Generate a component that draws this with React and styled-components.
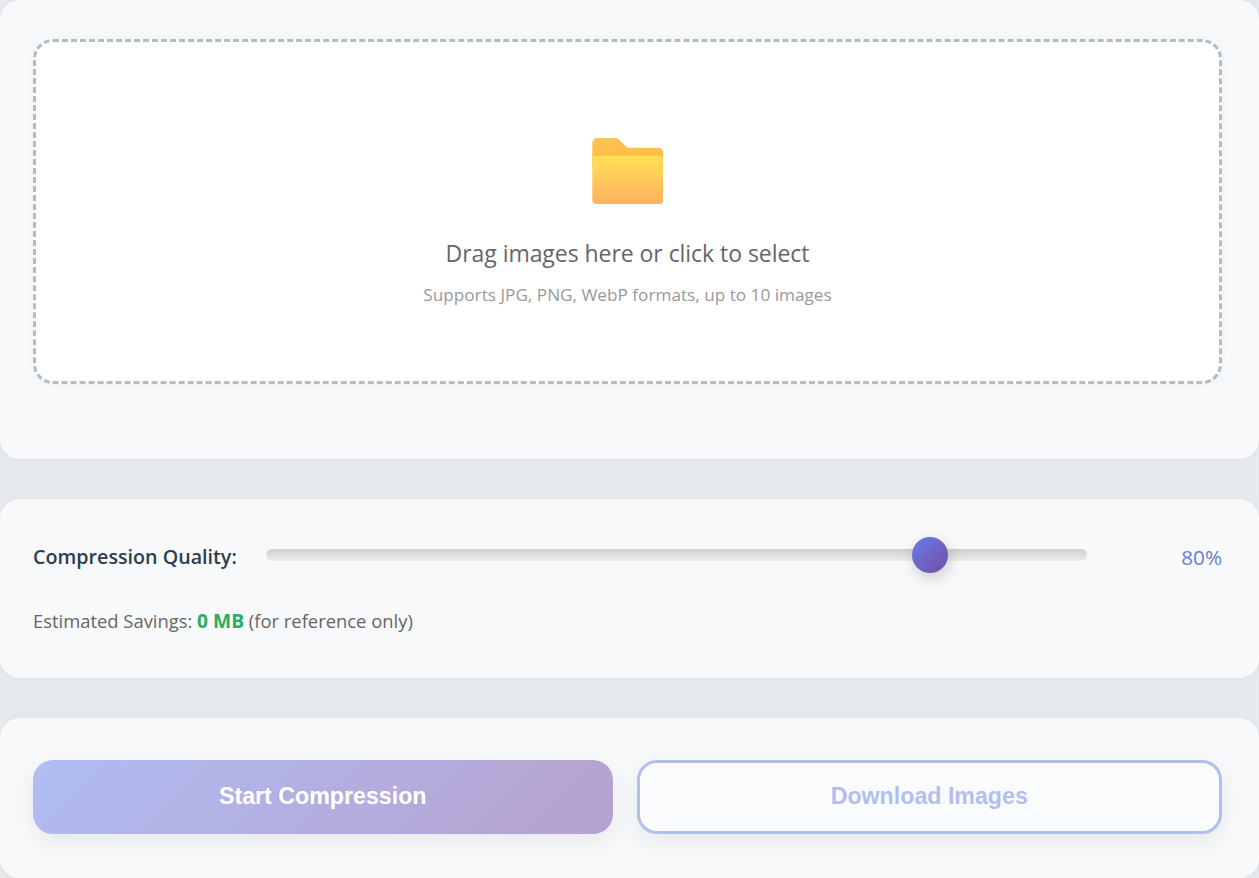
import React from 'react';
import styled, { createGlobalStyle } from 'styled-components';

const GlobalStyle = createGlobalStyle`
    html, body {
        margin: 0;
        padding: 0;
        height: 878px;
        overflow: hidden;
    }
    body {
        font-family: "Open Sans", "Noto Sans", sans-serif;
        background-color: #e5e8eb;
        background-image:
            repeating-linear-gradient(90deg, rgba(255, 255, 255, 0.12) 0 1px, transparent 1px 4px),
            repeating-linear-gradient(0deg, rgba(255, 255, 255, 0.12) 0 1px, transparent 1px 4px);
    }
`;

const Page = styled.div`
    display: flex;
    flex-direction: column;
    gap: 40px;
`;

const Card = styled.section`
    background: #f8f9fb;
    border-radius: 20px;
    padding: ${(props) => props.$padding};
    box-shadow: 0 0 6px rgba(0, 0, 0, 0.03);
`;

const DropZone = styled.div`
    height: 345px;
    box-sizing: border-box;
    background: #fff;
    border: 3px dashed #b0bec5;
    border-radius: 20px;
    display: flex;
    flex-direction: column;
    align-items: center;
    box-shadow: 0 0 10px rgba(0, 0, 0, 0.04);
    padding-top: 96px;
`;

const FolderIcon = styled.svg`
    width: 71.5px;
    height: 66px;
    display: block;
`;

const DropTitle = styled.div`
    margin-top: 34px;
    font-size: 23px;
    line-height: 30px;
    letter-spacing: -0.05px;
    color: #666;
`;

const DropHint = styled.div`
    margin-top: 16px;
    font-size: 17.2px;
    line-height: 22px;
    color: #999;
`;

const QualityRow = styled.div`
    display: flex;
    align-items: center;
    height: 36px;
`;

const QualityLabel = styled.label`
    width: 233px;
    flex: none;
    padding-top: 3px;
    font-size: 19.7px;
    font-weight: 600;
    color: #2c3e50;
    white-space: nowrap;
`;

const SliderTrack = styled.div`
    position: relative;
    width: 821px;
    height: 12px;
    flex: none;
    border-radius: 6px;
    background: linear-gradient(180deg, #cdcdcd, #eeeeee);
`;

const SliderThumb = styled.div`
    position: absolute;
    top: 50%;
    width: 36px;
    height: 36px;
    border-radius: 50%;
    transform: translate(-50%, -50%);
    background: linear-gradient(135deg, #667eea, #764ba2);
    box-shadow: 2px 5px 15px rgba(0, 0, 0, 0.18);
`;

const QualityValue = styled.div`
    flex: 1;
    padding-top: 3px;
    text-align: right;
    font-size: 20.7px;
    color: #667eca;
`;

const Savings = styled.p`
    margin: 36px 0 0;
    font-size: 18.4px;
    line-height: 24px;
    color: #666;
`;

const SavingsAmount = styled.strong`
    color: #27ae60;
    font-size: 19.2px;
    font-weight: 700;
`;

const Actions = styled.div`
    display: flex;
    gap: 24px;
`;

const Button = styled.button`
    flex: 1;
    height: 74px;
    box-sizing: border-box;
    padding: 0 0 2px;
    border-radius: 20px;
    font-family: "Liberation Sans", Arial, sans-serif;
    font-size: 23.2px;
    font-weight: 700;
    box-shadow: 0 8px 24px rgba(0, 0, 0, 0.07);
`;

const PrimaryButton = styled(Button)`
    border: none;
    color: #fff;
    background: linear-gradient(135deg, #b0bdf3, #b6a1cd);
`;

const OutlineButton = styled(Button)`
    border: 3px solid #b2bfee;
    color: #b2bfee;
    background: #fafbfd;
`;

const quality = 80;

export default function App() {
    return (
        <Page>
            <GlobalStyle />
            <Card $padding="39px 37px 75px 33px">
                <DropZone>
                    <FolderIcon viewBox="0 0 72 67">
                        <defs>
                            <linearGradient id="folderFront" x1="0" y1="0" x2="0" y2="1">
                                <stop offset="0" stopColor="#ffe055" />
                                <stop offset="1" stopColor="#ffb25f" />
                            </linearGradient>
                            <linearGradient id="folderBack" x1="0" y1="0" x2="0" y2="1">
                                <stop offset="0" stopColor="#ffc450" />
                                <stop offset="1" stopColor="#ffb945" />
                            </linearGradient>
                        </defs>
                        <path d="M0 5a5 5 0 0 1 5-5h19a3 3 0 0 1 2.2 1L36 10h31a5 5 0 0 1 5 5v15H0z" fill="url(#folderBack)" />
                        <path d="M0 22a4 4 0 0 1 4-4h64a4 4 0 0 1 4 4v41a4 4 0 0 1-4 4H4a4 4 0 0 1-4-4z" fill="url(#folderFront)" />
                    </FolderIcon>
                    <DropTitle>Drag images here or click to select</DropTitle>
                    <DropHint>Supports JPG, PNG, WebP formats, up to 10 images</DropHint>
                </DropZone>
            </Card>
            <Card $padding="38px 37px 45px 33px">
                <QualityRow>
                    <QualityLabel>Compression Quality:</QualityLabel>
                    <SliderTrack>
                        <SliderThumb style={{ left: `${quality * 1.0112}%` }} />
                    </SliderTrack>
                    <QualityValue>{quality}%</QualityValue>
                </QualityRow>
                <Savings>
                    Estimated Savings: <SavingsAmount>0 MB</SavingsAmount> (for reference only)
                </Savings>
            </Card>
            <Card $padding="42px 37px 44px 33px">
                <Actions>
                    <PrimaryButton>Start Compression</PrimaryButton>
                    <OutlineButton>Download Images</OutlineButton>
                </Actions>
            </Card>
        </Page>
    );
}
